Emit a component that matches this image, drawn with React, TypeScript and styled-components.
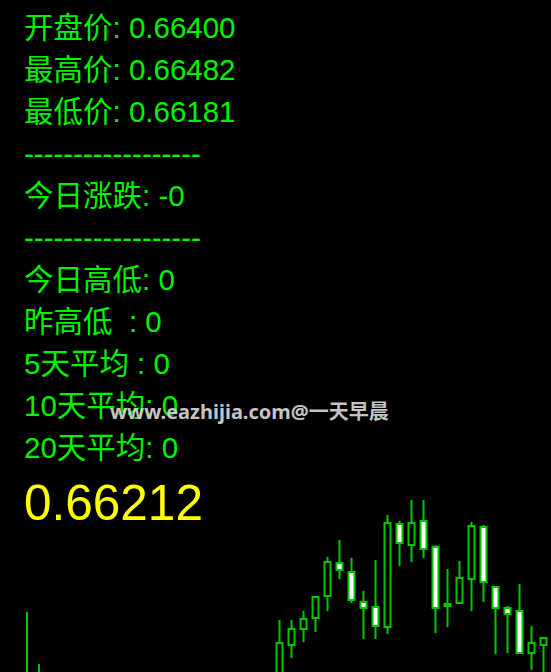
import styled, { createGlobalStyle } from "styled-components";

const GlobalStyle = createGlobalStyle`
  html, body {
    margin: 0;
    padding: 0;
    background: #000;
  }
`;

type Candle = {
  wick: [number, number];
  body: [number, number];
  up: boolean;
};

// visible candles, 12px apart, starting at x = 279.5
const candles: Candle[] = [
  { wick: [620, 690], body: [643, 690], up: false },
  { wick: [620, 658], body: [629, 645], up: false },
  { wick: [611, 642], body: [619, 629], up: false },
  { wick: [596, 632], body: [597, 618], up: false },
  { wick: [557, 611], body: [562, 596], up: false },
  { wick: [540, 579], body: [563, 570], up: true },
  { wick: [558, 603], body: [572, 600], up: true },
  { wick: [591, 639], body: [602, 608], up: true },
  { wick: [560, 639], body: [607, 626], up: true },
  { wick: [515, 634], body: [523, 627], up: false },
  { wick: [521, 566], body: [524, 543], up: true },
  { wick: [500, 562], body: [523, 545], up: false },
  { wick: [500, 558], body: [521, 549], up: true },
  { wick: [545, 633], body: [547, 608], up: true },
  { wick: [569, 627], body: [604, 606], up: true },
  { wick: [561, 604], body: [578, 603], up: false },
  { wick: [522, 611], body: [526, 579], up: false },
  { wick: [525, 602], body: [527, 582], up: true },
  { wick: [587, 654], body: [587, 608], up: true },
  { wick: [606, 653], body: [608, 614], up: true },
  { wick: [584, 654], body: [611, 653], up: true },
  { wick: [626, 670], body: [643, 653], up: false },
  { wick: [637, 690], body: [638, 645], up: false },
];

const lines: string[] = [
  "开盘价: 0.66400",
  "最高价: 0.66482",
  "最低价: 0.66181",
  "------------------",
  "今日涨跌: -0",
  "------------------",
  "今日高低: 0",
  "昨高低  : 0",
  "5天平均 : 0",
  "10天平均: 0",
  "20天平均: 0",
];

const Screen = styled.div`
  position: relative;
  width: 551px;
  height: 672px;
  overflow: hidden;
  background: #000;
`;

const Chart = styled.svg`
  position: absolute;
  inset: 0;
`;

const QuotePanel = styled.div`
  position: relative;
  display: flex;
  flex-direction: column;
  padding: 7px 0 0 24px;
  font-family: "Liberation Sans", "Noto Sans CJK SC", sans-serif;
`;

const InfoLine = styled.div`
  font-size: 29.5px;
  line-height: 42px;
  color: #00f400;
  white-space: pre;
`;

const Price = styled.div`
  margin-top: 4px;
  font-size: 49.5px;
  line-height: 60px;
  color: #ffff00;
`;

const Watermark = styled.div`
  position: absolute;
  left: 110px;
  top: 396px;
  font-family: "Noto Sans", "Noto Sans CJK SC", sans-serif;
  font-weight: 700;
  font-size: 20px;
  color: rgba(225, 225, 225, 0.88);
  text-shadow: 1px 1px 1px rgba(0, 0, 0, 0.6);
  white-space: nowrap;
`;

const GREEN = "#00c800";

export default function App() {
  return (
    <>
      <GlobalStyle />
      <Screen>
        <Chart width={551} height={672} viewBox="0 0 551 672">
          <line x1={27} y1={612} x2={27} y2={672} stroke={GREEN} strokeWidth={2} />
          <line x1={39} y1={664} x2={39} y2={672} stroke={GREEN} strokeWidth={2} />
          {candles.map((c, i) => {
            const cx = 279.5 + i * 12;
            return (
              <g key={i}>
                <line x1={cx} y1={c.wick[0]} x2={cx} y2={c.wick[1]} stroke={GREEN} strokeWidth={2} />
                <rect
                  x={cx - 3}
                  y={c.body[0]}
                  width={6}
                  height={Math.max(c.body[1] - c.body[0], 1)}
                  fill={c.up ? "#ffffff" : "#000000"}
                  stroke={GREEN}
                  strokeWidth={2}
                />
              </g>
            );
          })}
        </Chart>
        <QuotePanel>
          {lines.map((t, i) => (
            <InfoLine key={i}>{t}</InfoLine>
          ))}
          <Price>0.66212</Price>
        </QuotePanel>
        <Watermark>www.eazhijia.com@一天早晨</Watermark>
      </Screen>
    </>
  );
}
